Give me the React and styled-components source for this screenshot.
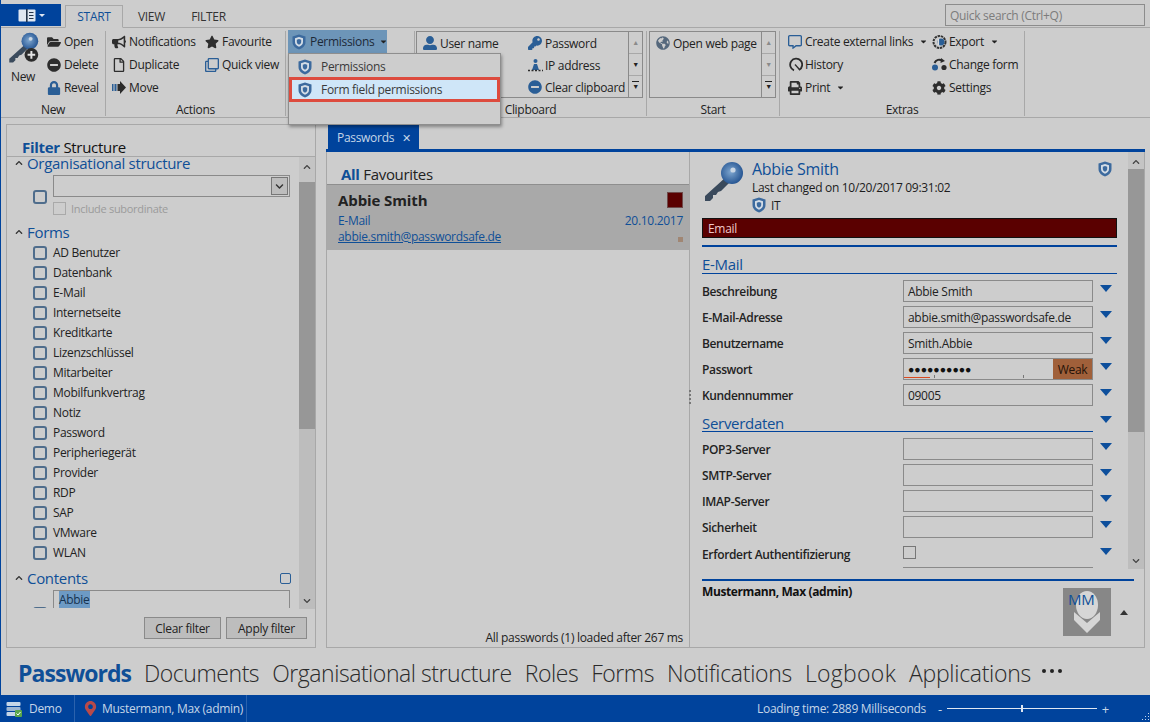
import React from 'react'
import styled, { createGlobalStyle } from 'styled-components';
import {
    FaBullhorn, FaStar, FaRegFile, FaRegClone, FaFolderOpen, FaMinusCircle, FaLock,
    FaUserAlt, FaKey, FaGlobeAmericas, FaRegCommentAlt, FaPrint, FaCog,
    FaCaretDown, FaChevronUp, FaChevronDown, FaMapMarkerAlt,
} from 'react-icons/fa';

const BLUE = '#00439c';
const TEXT_BLUE = '#0f4f97';
const ICON_BLUE = '#2a5e96';
const FONT = '"Open Sans", "Liberation Sans", sans-serif';

const formNames = ['AD Benutzer', 'Datenbank', 'E-Mail', 'Internetseite', 'Kreditkarte', 'Lizenzschlüssel', 'Mitarbeiter', 'Mobilfunkvertrag', 'Notiz', 'Password', 'Peripheriegerät', 'Provider', 'RDP', 'SAP', 'VMware', 'WLAN'];
const mailFields = [
    { label: 'Beschreibung', value: 'Abbie Smith' },
    { label: 'E-Mail-Adresse', value: 'abbie.smith@passwordsafe.de' },
    { label: 'Benutzername', value: 'Smith.Abbie' },
    { label: 'Passwort', password: true },
    { label: 'Kundennummer', value: '09005' },
];
const serverFields = ['POP3-Server', 'SMTP-Server', 'IMAP-Server', 'Sicherheit'];
const navItems = [
    { name: 'Documents', spacing: -0.45 },
    { name: 'Organisational structure', spacing: -0.45 },
    { name: 'Roles', spacing: -0.45 },
    { name: 'Forms', spacing: -0.45 },
    { name: 'Notifications', spacing: -0.3 },
    { name: 'Logbook', spacing: 0.3 },
    { name: 'Applications', spacing: -0.3 },
];

// ================ //
//    SVG DRAWINGS  //
// ================ //
function Shield({ size = 14 }) {
    return (
        <svg width={size} height={size + 2} viewBox="0 0 14 16">
            <path d="M7 0.5 L13.5 2.5 V8 C13.5 12 10 14.5 7 15.5 C4 14.5 0.5 12 0.5 8 V2.5 Z" fill="#3c6a9e" />
            <path d="M7 3 L11 4.2 V8 C11 10.5 9 12 7 12.8 C5 12 3 10.5 3 8 V4.2 Z" fill="#d4dde6" />
            <path d="M7 5 L9.2 5.8 V8 C9.2 9.4 8 10.2 7 10.7 C6 10.2 4.8 9.4 4.8 8 V5.8 Z" fill="#3c6a9e" />
        </svg>
    );
}

function BigKey({ size = 42, plus }) {
    return (
        <svg width={size} height={size} viewBox="0 0 42 42">
            <defs>
                <radialGradient id="keyhead" cx="0.45" cy="0.45" r="0.6">
                    <stop offset="0" stopColor="#7ea6cf" />
                    <stop offset="1" stopColor="#1f4f8e" />
                </radialGradient>
            </defs>
            <path d="M24 16 L3 35 L3 40 L8 40 L11 37 L11 34 L14 34 L16 31 L19 30 L29 20 Z" fill="#3a4a5c" />
            <circle cx="30" cy="12" r="11" fill="url(#keyhead)" />
            <circle cx="31" cy="9" r="2.6" fill="#c9d6e4" />
            {plus && <circle cx="32" cy="30" r="9" fill="#2b2b2b" />}
            {plus && <path d="M27 30 H37 M32 25 V35" stroke="#e4e4e4" strokeWidth="2.6" />}
        </svg>
    );
}

function MoveIcon() {
    return (
        <svg width="14" height="13" viewBox="0 0 14 13">
            <rect x="0" y="3" width="1.5" height="7" fill={ICON_BLUE} />
            <rect x="2.5" y="3" width="2" height="7" fill={ICON_BLUE} />
            <path d="M5.5 3 H8 V0 L14 6.5 L8 13 V10 H5.5 Z" fill="#2b2b2b" />
        </svg>
    );
}

function HistoryIcon() {
    return (
        <svg width="15" height="15" viewBox="0 0 15 15" fill="none">
            <path d="M11 13 A6 6 0 1 0 6 13.3" stroke="#2b2b2b" strokeWidth="1.8" />
            <path d="M7 7.5 L11.5 12.5" stroke="#2b2b2b" strokeWidth="1.3" />
        </svg>
    );
}

function ChangeFormIcon() {
    return (
        <svg width="15" height="13" viewBox="0 0 15 13">
            <circle cx="3" cy="9.5" r="3" fill={ICON_BLUE} />
            <circle cx="12" cy="9.5" r="2.6" fill="#2b2b2b" />
            <path d="M2.5 5 C4 1.5 7.5 1 10 2.5" stroke="#2b2b2b" strokeWidth="2" fill="none" />
            <path d="M9 0 L13 3 L8.5 5 Z" fill="#2b2b2b" />
        </svg>
    );
}

function ExportIcon() {
    return (
        <svg width="16" height="16" viewBox="0 0 16 16" fill="none">
            <circle cx="7.5" cy="8" r="6" stroke="#333" strokeWidth="2" strokeDasharray="2.4 0.8" />
            <circle cx="9" cy="8" r="3.4" fill={ICON_BLUE} />
            <path d="M6.5 5 V11" stroke="#ddd" strokeWidth="1.2" />
        </svg>
    );
}

function NetworkIcon() {
    return (
        <svg width="15" height="13" viewBox="0 0 15 13">
            <circle cx="7.5" cy="2" r="2" fill={ICON_BLUE} />
            <path d="M4 11 L6 5 H9 L11 11 Z" fill={ICON_BLUE} />
            <path d="M0 11.5 H15" stroke="#2b2b2b" strokeWidth="1.4" strokeDasharray="2 1.5" />
        </svg>
    );
}

function DemoIcon() {
    return (
        <svg width="16" height="16" viewBox="0 0 16 16">
            <rect x="0.5" y="1" width="14" height="4" rx="1" fill="#c5d6e8" />
            <rect x="0.5" y="6" width="14" height="4" rx="1" fill="#9db6d2" />
            <rect x="0.5" y="11" width="14" height="4" rx="1" fill="#c5d6e8" />
            <rect x="9" y="9" width="7" height="7" rx="1" fill="#5aa64a" />
            <path d="M10.5 12.5 L12 14 L14.5 11" stroke="#fff" strokeWidth="1" fill="none" />
        </svg>
    );
}

function Avatar() {
    return (
        <svg width="48" height="48" viewBox="0 0 48 48">
            <rect width="48" height="48" fill="#878787" />
            <ellipse cx="24" cy="17" rx="11" ry="14" fill="#d6d6d6" />
            <path d="M11 24 L24 35 L37 24 L37 32 L24 45 L11 32 Z" fill="#d6d6d6" />
        </svg>
    );
}

// ================ //
//   SMALL PARTS    //
// ================ //
function Tool({ icon, children, caret, color }) {
    return (
        <ToolItem>
            <ToolIcon color={color}>{icon}</ToolIcon>
            {children}
            {caret && <Caret><FaCaretDown /></Caret>}
        </ToolItem>
    );
}

function Scrollbar({ thumbHeight, capHeight }) {
    return (
        <ScrollTrack>
            <ScrollCap height={capHeight}><FaChevronUp /></ScrollCap>
            <ScrollThumb height={thumbHeight} />
            <ScrollCapBottom><FaChevronDown /></ScrollCapBottom>
        </ScrollTrack>
    );
}

function Field({ label, children }) {
    return (
        <FieldRow>
            <FieldLabel>{label}</FieldLabel>
            {children}
            <FieldArrow />
        </FieldRow>
    );
}

function RibbonGroup({ width, label, children, pad }) {
    return (
        <GroupBox width={width}>
            <GroupContent pad={pad}>{children}</GroupContent>
            <GroupLabel>{label}</GroupLabel>
        </GroupBox>
    );
}

export default function App() {
    return (
        <Page>
            <GlobalStyle />
            <TitleBar>
                <AppButton>
                    <svg width="18" height="13" viewBox="0 0 18 13">
                        <rect x="0.5" y="0.5" width="17" height="12" rx="1" fill="#dfe7f2" />
                        <rect x="8" y="0" width="1.6" height="13" fill="#24344a" />
                        <path d="M11 3.5 H15.5 M11 6.5 H15.5 M11 9.5 H15.5" stroke="#24344a" strokeWidth="1" />
                    </svg>
                    <AppCaret />
                </AppButton>
                <RibbonTab active>START</RibbonTab>
                <RibbonTab>VIEW</RibbonTab>
                <RibbonTab>FILTER</RibbonTab>
                <QuickSearch>Quick search (Ctrl+Q)</QuickSearch>
            </TitleBar>

            <Ribbon>
                <RibbonGroup width={105} label="New">
                    <NewGroup>
                        <BigButton>
                            <BigKey size={32} plus />
                            <span>New</span>
                        </BigButton>
                        <ToolColumn>
                            <Tool icon={<FaFolderOpen />}>Open</Tool>
                            <Tool icon={<FaMinusCircle />}>Delete</Tool>
                            <Tool icon={<FaLock />} color={ICON_BLUE}>Reveal</Tool>
                        </ToolColumn>
                    </NewGroup>
                </RibbonGroup>
                <RibbonGroup width={180} label="Actions">
                    <ToolsGroup padLeft={6}>
                        <ToolColumn width={93}>
                            <Tool icon={<FaBullhorn />}>Notifications</Tool>
                            <Tool icon={<FaRegFile />}>Duplicate</Tool>
                            <Tool icon={<MoveIcon />}>Move</Tool>
                        </ToolColumn>
                        <ToolColumn>
                            <Tool icon={<FaStar />}>Favourite</Tool>
                            <Tool icon={<FaRegClone />} color={ICON_BLUE}>Quick view</Tool>
                        </ToolColumn>
                    </ToolsGroup>
                </RibbonGroup>
                <RibbonGroup width={129}>
                    <PermissionsButton>
                        <Shield />
                        Permissions
                        <ButtonCaret><FaCaretDown /></ButtonCaret>
                    </PermissionsButton>
                    <Menu>
                        <MenuItem>
                            <Shield />
                            Permissions
                        </MenuItem>
                        <MenuItem highlighted>
                            <Shield />
                            Form field permissions
                        </MenuItem>
                    </Menu>
                </RibbonGroup>
                <RibbonGroup width={232} label="Clipboard" pad="0 3px 0 1px">
                    <Gallery>
                        <GalleryGrid>
                            <GalleryColumn width={105}>
                                <Tool icon={<FaUserAlt />} color={ICON_BLUE}>User name</Tool>
                            </GalleryColumn>
                            <GalleryColumn>
                                <Tool icon={<FaKey />} color={ICON_BLUE}>Password</Tool>
                                <Tool icon={<NetworkIcon />}>IP address</Tool>
                                <Tool icon={<FaMinusCircle />} color={ICON_BLUE}>Clear clipboard</Tool>
                            </GalleryColumn>
                        </GalleryGrid>
                        <GalleryScroll>
                            <GalleryArrow muted>▲</GalleryArrow>
                            <GalleryArrow>▼</GalleryArrow>
                            <GalleryArrow more>▼</GalleryArrow>
                        </GalleryScroll>
                    </Gallery>
                </RibbonGroup>
                <RibbonGroup width={133} label="Start" pad="0 3px 0 2px">
                    <Gallery>
                        <GalleryGrid>
                            <GalleryColumn>
                                <Tool icon={<FaGlobeAmericas />} color="#55687c">Open web page</Tool>
                            </GalleryColumn>
                        </GalleryGrid>
                        <GalleryScroll>
                            <GalleryArrow muted>▲</GalleryArrow>
                            <GalleryArrow muted>▼</GalleryArrow>
                            <GalleryArrow more>▼</GalleryArrow>
                        </GalleryScroll>
                    </Gallery>
                </RibbonGroup>
                <RibbonGroup width={245} label="Extras">
                    <ToolsGroup padLeft={8}>
                        <ToolColumn width={144}>
                            <Tool icon={<FaRegCommentAlt />} color={ICON_BLUE} caret>Create external links</Tool>
                            <Tool icon={<HistoryIcon />}>History</Tool>
                            <Tool icon={<FaPrint />} caret>Print</Tool>
                        </ToolColumn>
                        <ToolColumn>
                            <Tool icon={<ExportIcon />} caret>Export</Tool>
                            <Tool icon={<ChangeFormIcon />}>Change form</Tool>
                            <Tool icon={<FaCog />}>Settings</Tool>
                        </ToolColumn>
                    </ToolsGroup>
                </RibbonGroup>
            </Ribbon>

            <Main>
                <FilterPanel>
                    <PanelTitle>
                        <strong>Filter</strong> Structure
                    </PanelTitle>
                    <FilterScroll>
                        <FilterContent>
                            <SectionHead first>
                                <SectionChevron><FaChevronUp /></SectionChevron>
                                Organisational structure
                            </SectionHead>
                            <OrgRow>
                                <Check />
                                <OrgControls>
                                    <SelectBox>
                                        <SelectButton><FaChevronDown /></SelectButton>
                                    </SelectBox>
                                    <SubordinateRow>
                                        <DisabledCheck />
                                        Include subordinate
                                    </SubordinateRow>
                                </OrgControls>
                            </OrgRow>
                            <SectionHead>
                                <SectionChevron><FaChevronUp /></SectionChevron>
                                Forms
                            </SectionHead>
                            <div>
                                {formNames.map(name => (
                                    <FormRow key={name}>
                                        <Check />
                                        {name}
                                    </FormRow>
                                ))}
                            </div>
                            <SectionHead spaced>
                                <SectionChevron><FaChevronUp /></SectionChevron>
                                Contents
                                <SmallCheck />
                            </SectionHead>
                            <ContentsRow>
                                <Check />
                                <ContentsInput><mark>Abbie</mark></ContentsInput>
                            </ContentsRow>
                        </FilterContent>
                        <Scrollbar thumbHeight={247} capHeight={25} />
                    </FilterScroll>
                    <FilterButtons>
                        <FilterButton width={77}>Clear filter</FilterButton>
                        <FilterButton width={81}>Apply filter</FilterButton>
                    </FilterButtons>
                </FilterPanel>

                <Center>
                    <TabStrip>
                        <DocTab>Passwords <TabClose>✕</TabClose></DocTab>
                    </TabStrip>
                    <CenterBody>
                        <ListPane>
                            <ListTitle><strong>All</strong> Favourites</ListTitle>
                            <ListRow>
                                <RowTop>
                                    <RowName>Abbie Smith</RowName>
                                    <ColorSquare />
                                </RowTop>
                                <RowMeta>
                                    <span>E-Mail</span>
                                    <span>20.10.2017</span>
                                </RowMeta>
                                <RowMeta>
                                    <u>abbie.smith@passwordsafe.de</u>
                                    <TinySquare />
                                </RowMeta>
                            </ListRow>
                            <ListFooter>All passwords (1) loaded after 267 ms</ListFooter>
                        </ListPane>

                        <DetailPane>
                            <DetailScroll>
                                <DetailBody>
                                    <DetailHeader>
                                        <BigKey />
                                        <HeaderText>
                                            <DetailName>Abbie Smith</DetailName>
                                            <HeaderLine>Last changed on 10/20/2017 09:31:02</HeaderLine>
                                            <HeaderLine>
                                                <OrgIcon><Shield size={14} /></OrgIcon>
                                                IT
                                            </HeaderLine>
                                        </HeaderText>
                                        <HeaderShield><Shield /></HeaderShield>
                                    </DetailHeader>
                                    <TagBar>Email</TagBar>
                                    <ThickRule />
                                    <FieldHeading>E-Mail</FieldHeading>
                                    {mailFields.map(field => (
                                        <Field key={field.label} label={field.label}>
                                            {field.password ? (
                                                <PasswordBox>
                                                    <PasswordDots>●●●●●●●●●●</PasswordDots>
                                                    <StrengthMeter />
                                                    <WeakBadge>Weak</WeakBadge>
                                                </PasswordBox>
                                            ) : (
                                                <InputBox>{field.value}</InputBox>
                                            )}
                                        </Field>
                                    ))}
                                    <ServerHeading>
                                        <FieldHeading short>Serverdaten</FieldHeading>
                                        <FieldArrow />
                                    </ServerHeading>
                                    {serverFields.map(label => (
                                        <Field key={label} label={label}>
                                            <InputBox />
                                        </Field>
                                    ))}
                                    <Field label="Erfordert Authentifizierung">
                                        <CheckCell><PlainCheck /></CheckCell>
                                    </Field>
                                </DetailBody>
                                <Scrollbar thumbHeight={263} capHeight={17} />
                            </DetailScroll>
                            <Owner>
                                <OwnerName>Mustermann, Max (admin)</OwnerName>
                                <AvatarBox>
                                    <Avatar />
                                    <AvatarInitials>MM</AvatarInitials>
                                </AvatarBox>
                                <OwnerToggle />
                            </Owner>
                        </DetailPane>
                    </CenterBody>
                </Center>
            </Main>

            <BottomNav>
                <NavItem active spacing={-0.95}>Passwords</NavItem>
                {navItems.map(item => <NavItem key={item.name} spacing={item.spacing}>{item.name}</NavItem>)}
                <NavMore>
                    <NavDot /><NavDot /><NavDot />
                </NavMore>
            </BottomNav>

            <StatusBar>
                <StatusCell width={74}>
                    <StatusIcon><DemoIcon /></StatusIcon>
                    Demo
                </StatusCell>
                <StatusCell width={172} second>
                    <StatusIcon color="#b84a4a"><FaMapMarkerAlt /></StatusIcon>
                    Mustermann, Max (admin)
                </StatusCell>
                <LoadingTime>Loading time: 2889 Milliseconds</LoadingTime>
                <Zoom>
                    <span>-</span>
                    <ZoomTrack />
                    <span>+</span>
                </Zoom>
                <ResizeGrip />
            </StatusBar>
        </Page>
    );
}

// ============== //
//     STYLES     //
// ============== //
const GlobalStyle = createGlobalStyle`
    html, body {
        margin: 0;
        padding: 0;
        background: #cdcdcd;
    }
    * {
        box-sizing: border-box;
    }
    svg {
        flex: none;
    }
`;

const Page = styled.div`
    width: 1150px;
    height: 722px;
    display: flex;
    flex-direction: column;
    overflow: hidden;
    background: #cdcdcd;
    border-left: 1px solid ${BLUE};
    color: #222;
    font-family: ${FONT};
    font-size: 12px;
    letter-spacing: -0.3px;
`;

const TitleBar = styled.div`
    height: 28px;
    flex: none;
    display: flex;
    align-items: flex-end;
    position: relative;
    border-bottom: 1px solid #a8a8a8;
`;

const AppButton = styled.div`
    width: 60px;
    height: 22px;
    margin-bottom: 1px;
    margin-right: 4px;
    display: flex;
    align-items: center;
    justify-content: center;
    gap: 3px;
    background: ${BLUE};
`;

const AppCaret = styled.div`
    width: 0;
    height: 0;
    border-left: 3px solid transparent;
    border-right: 3px solid transparent;
    border-top: 3px solid #dfe7f2;
`;

const RibbonTab = styled.div`
    height: 23px;
    width: ${props => props.active ? '58px' : '57px'};
    display: flex;
    align-items: center;
    justify-content: center;
    margin-bottom: -1px;
    color: ${props => props.active ? TEXT_BLUE : '#333'};
    border: 1px solid ${props => props.active ? '#a8a8a8' : 'transparent'};
    border-bottom-color: ${props => props.active ? '#cdcdcd' : 'transparent'};
`;

const QuickSearch = styled.div`
    position: absolute;
    right: 5px;
    top: 4px;
    width: 200px;
    height: 22px;
    padding-left: 4px;
    display: flex;
    align-items: center;
    border: 1px solid #8c8c8c;
    color: #7c7c7c;
`;

const Ribbon = styled.div`
    height: 90px;
    flex: none;
    display: flex;
    border-bottom: 1px solid #a8a8a8;
`;

const GroupBox = styled.div`
    position: relative;
    width: ${props => props.width}px;
    height: 85px;
    margin-top: 3px;
    display: flex;
    flex-direction: column;
    border-right: 1px solid #a8a8a8;
`;

const GroupContent = styled.div`
    height: 67px;
    flex: none;
    padding: ${props => props.pad || '0'};
`;

const GroupLabel = styled.div`
    flex: 1;
    display: flex;
    align-items: center;
    justify-content: center;
    padding-top: 3px;
`;

const NewGroup = styled.div`
    display: flex;
    padding-left: 6px;
    gap: 8px;
`;

const BigButton = styled.div`
    width: 32px;
    display: flex;
    flex-direction: column;
    align-items: center;
    gap: 4px;
    margin-top: 1px;
`;

const ToolColumn = styled.div`
    width: ${props => props.width ? `${props.width}px` : 'auto'};
    margin-top: -1px;
    display: flex;
    flex-direction: column;
`;

const ToolItem = styled.div`
    height: 23px;
    flex: none;
    display: flex;
    align-items: center;
    white-space: nowrap;
`;

const ToolIcon = styled.span`
    width: 17px;
    flex: none;
    display: flex;
    align-items: center;
    font-size: 14px;
    color: ${props => props.color || '#2d2d2d'};
`;

const Caret = styled.span`
    display: inline-flex;
    margin-left: 6px;
    font-size: 9px;
    color: #222;
`;

const ButtonCaret = styled(Caret)`
    margin-left: 1px;
`;

const ToolsGroup = styled.div`
    display: flex;
    padding-left: ${props => props.padLeft}px;
`;

const PermissionsButton = styled.div`
    width: 99px;
    height: 23px;
    margin-left: 2px;
    margin-top: -1px;
    padding-left: 4px;
    display: flex;
    align-items: center;
    gap: 4px;
    background: #6d95b8;
    color: #1d2a38;
`;

const Menu = styled.div`
    position: absolute;
    left: 2px;
    top: 22px;
    width: 213px;
    height: 72px;
    padding: 1px 1px;
    background: #cdcdcd;
    border: 1px solid #8e8e8e;
    box-shadow: 1px 2px 3px rgba(0, 0, 0, .35);
    z-index: 10;
`;

const MenuItem = styled.div`
    height: 23px;
    display: flex;
    align-items: center;
    gap: 9px;
    padding-left: 8px;
    color: #3a3a3a;
    background: ${props => props.highlighted ? '#cfe6f8' : 'transparent'};
    outline: ${props => props.highlighted ? '3px solid #dd4b3e' : 'none'};
    outline-offset: -2px;
`;

const Gallery = styled.div`
    height: 67px;
    display: flex;
    border: 1px solid #8a8a8a;
`;

const GalleryGrid = styled.div`
    flex: 1;
    display: flex;
    padding-left: 6px;
`;

const GalleryColumn = styled.div`
    width: ${props => props.width ? `${props.width}px` : 'auto'};
    display: flex;
    flex-direction: column;

    ${ToolItem} {
        height: 22px;
    }
`;

const GalleryScroll = styled.div`
    width: 14px;
    flex: none;
    display: flex;
    flex-direction: column;
    border-left: 1px solid #8a8a8a;
`;

const GalleryArrow = styled.div`
    position: relative;
    flex: 1;
    display: flex;
    align-items: center;
    justify-content: center;
    font-size: 7px;
    color: ${props => props.muted ? '#8a8a8a' : '#222'};
    border-bottom: 1px solid #a8a8a8;

    &:last-child {
        border-bottom: 0;
    }

    &::before {
        content: '';
        display: ${props => props.more ? 'block' : 'none'};
        position: absolute;
        left: 3px;
        top: 5px;
        width: 7px;
        height: 1px;
        background: #222;
    }
`;

const Main = styled.div`
    flex: 1;
    min-height: 0;
    display: flex;
    gap: 10px;
    padding: 6px 5px 2px 5px;
`;

const FilterPanel = styled.div`
    width: 310px;
    flex: none;
    display: flex;
    flex-direction: column;
    border: 1px solid #a8a8a8;
`;

const PanelTitle = styled.div`
    height: 32px;
    flex: none;
    padding: 13px 0 0 15px;
    font-size: 15px;
    line-height: 18px;
    color: #111;
    border-bottom: 1px solid #a8a8a8;

    strong {
        color: ${TEXT_BLUE};
        font-weight: 700;
    }
`;

const FilterScroll = styled.div`
    height: 452px;
    flex: none;
    display: flex;
`;

const FilterContent = styled.div`
    flex: 1;
    min-width: 0;
`;

const SectionHead = styled.div`
    position: relative;
    height: ${props => props.first ? '14px' : '20px'};
    line-height: ${props => props.first ? '12px' : '20px'};
    margin-top: ${props => props.spaced ? '6px' : '0'};
    padding-left: 20px;
    padding-bottom: ${props => props.first ? '2px' : '0'};
    display: flex;
    align-items: center;
    font-size: 15px;
    color: ${TEXT_BLUE};
`;

const SectionChevron = styled.span`
    width: 14px;
    margin-left: -12px;
    margin-right: -2px;
    display: inline-flex;
    font-size: 8px;
    color: #333;
`;

const Check = styled.span`
    width: 14px;
    height: 14px;
    flex: none;
    border: 2px solid #4f6d8c;
    border-radius: 3px;
`;

const SmallCheck = styled.span`
    position: absolute;
    right: 8px;
    top: 5px;
    width: 11px;
    height: 11px;
    border: 1px solid ${ICON_BLUE};
    border-radius: 2px;
`;

const OrgRow = styled.div`
    display: flex;
    align-items: center;
    gap: 6px;
    padding: 4px 0 0 26px;
    margin-bottom: 3px;
`;

const OrgControls = styled.div`
    flex: 1;
    padding-right: 2px;
`;

const SelectBox = styled.div`
    width: 237px;
    height: 22px;
    display: flex;
    justify-content: flex-end;
    align-items: center;
    padding-right: 1px;
    border: 1px solid #8a8a8a;
`;

const SelectButton = styled.div`
    width: 17px;
    height: 18px;
    display: flex;
    align-items: center;
    justify-content: center;
    font-size: 9px;
    color: #333;
    background: #bdbdbd;
    border: 1px solid #777;
`;

const SubordinateRow = styled.div`
    height: 22px;
    display: flex;
    align-items: center;
    gap: 5px;
    font-size: 11px;
    color: #9b9b9b;
`;

const DisabledCheck = styled.span`
    width: 13px;
    height: 13px;
    border: 1px solid #a9a9a9;
`;

const FormRow = styled.div`
    height: 20px;
    display: flex;
    align-items: center;
    gap: 6px;
    padding-left: 26px;

    ${Check} {
        margin-top: 2px;
    }
`;

const ContentsRow = styled.div`
    display: flex;
    align-items: flex-start;
    gap: 6px;
    margin-top: 2px;
    padding-left: 26px;
    height: 18px;
    overflow: hidden;

    ${Check} {
        margin-top: 17px;
    }
`;

const ContentsInput = styled.div`
    width: 237px;
    height: 40px;
    padding: 1px 5px;
    line-height: 16px;
    border: 1px solid #8a8a8a;

    mark {
        background: #6d9ac4;
        color: #16324f;
    }
`;

const ScrollTrack = styled.div`
    position: relative;
    width: 16px;
    flex: none;
    background: #bdbdbd;
`;

const ScrollCap = styled.div`
    height: ${props => props.height}px;
    display: flex;
    justify-content: center;
    padding-top: 6px;
    font-size: 8px;
    color: #444;
    background: #c4c4c4;
`;

const ScrollCapBottom = styled.div`
    position: absolute;
    left: 0;
    right: 0;
    bottom: 4px;
    display: flex;
    justify-content: center;
    font-size: 8px;
    color: #444;
`;

const ScrollThumb = styled.div`
    height: ${props => props.height}px;
    background: #979797;
`;

const FilterButtons = styled.div`
    flex: 1;
    display: flex;
    justify-content: flex-end;
    align-items: flex-start;
    gap: 5px;
    padding: 8px 8px 0 0;
`;

const FilterButton = styled.div`
    width: ${props => props.width}px;
    height: 22px;
    display: flex;
    align-items: center;
    justify-content: center;
    background: #bdbdbd;
    border: 1px solid #8a8a8a;
`;

const Center = styled.div`
    flex: 1;
    min-width: 0;
    display: flex;
    flex-direction: column;
`;

const TabStrip = styled.div`
    height: 27px;
    flex: none;
    padding-left: 2px;
    margin-top: 1px;
    border-bottom: 3px solid ${BLUE};
`;

const DocTab = styled.div`
    width: 91px;
    height: 24px;
    display: flex;
    align-items: center;
    gap: 8px;
    padding-left: 9px;
    color: #c5d6e8;
    background: ${BLUE};
`;

const TabClose = styled.span`
    font-size: 11px;
`;

const CenterBody = styled.div`
    flex: 1;
    min-height: 0;
    display: flex;
    border: 1px solid #a8a8a8;
    border-top: 0;
`;

const ListPane = styled.div`
    width: 363px;
    flex: none;
    display: flex;
    flex-direction: column;
    border-right: 1px solid #a8a8a8;
`;

const ListTitle = styled.div`
    height: 33px;
    flex: none;
    padding: 12px 0 0 14px;
    font-size: 15px;
    line-height: 20px;
    border-bottom: 1px solid #8e8e8e;

    strong {
        color: ${TEXT_BLUE};
        font-weight: 700;
    }
`;

const ListRow = styled.div`
    height: 65px;
    flex: none;
    padding: 3px 6px 0 11px;
    background: #a9a9a9;
`;

const RowTop = styled.div`
    height: 24px;
    display: flex;
    justify-content: space-between;
    align-items: center;
`;

const RowName = styled.div`
    font-size: 15px;
    font-weight: 700;
    color: #222;
    letter-spacing: -0.1px;
`;

const ColorSquare = styled.div`
    width: 16px;
    height: 16px;
    background: #5a0000;
    border: 1px solid #6e4a4a;
`;

const RowMeta = styled.div`
    height: 16px;
    display: flex;
    justify-content: space-between;
    align-items: center;
    color: ${TEXT_BLUE};
`;

const TinySquare = styled.div`
    width: 5px;
    height: 5px;
    margin-top: 6px;
    background: #a08673;
`;

const ListFooter = styled.div`
    margin-top: auto;
    height: 18px;
    padding-right: 6px;
    text-align: right;
    color: #222;
`;

const DetailPane = styled.div`
    position: relative;
    flex: 1;
    min-width: 0;
    display: flex;
    flex-direction: column;

    &::before {
        content: '';
        position: absolute;
        left: -1px;
        top: 238px;
        width: 2px;
        height: 14px;
        border-left: 2px dotted #777;
    }
`;

const DetailScroll = styled.div`
    height: 417px;
    flex: none;
    display: flex;
    overflow: hidden;
`;

const DetailBody = styled.div`
    flex: 1;
    min-width: 0;
    padding: 9px 11px 0 12px;
`;

const DetailHeader = styled.div`
    height: 57px;
    display: flex;
    gap: 8px;
`;

const HeaderText = styled.div`
    flex: 1;
    min-width: 0;
`;

const DetailName = styled.div`
    font-size: 16px;
    line-height: 17px;
    color: ${TEXT_BLUE};
`;

const HeaderLine = styled.div`
    height: 18px;
    display: flex;
    align-items: center;
    gap: 4px;
    color: #1c1c1c;
`;

const OrgIcon = styled.span`
    display: inline-flex;
    margin-right: 1px;
`;

const HeaderShield = styled.div`
    margin-right: 5px;
`;

const TagBar = styled.div`
    height: 20px;
    padding-left: 5px;
    display: flex;
    align-items: center;
    color: #f0c9c9;
    background: #5a0000;
    border: 1px solid #111;
`;

const ThickRule = styled.div`
    height: 2px;
    margin-top: 7px;
    background: ${BLUE};
`;

const FieldHeading = styled.div`
    height: ${props => props.short ? '24px' : '27px'};
    flex: none;
    padding-top: ${props => props.short ? '5px' : '7px'};
    font-size: 15px;
    line-height: 20px;
    color: ${TEXT_BLUE};
    border-bottom: 1px solid ${BLUE};
    margin-bottom: 4px;
`;

const FieldRow = styled.div`
    height: 26px;
    display: grid;
    grid-template-columns: 201px 190px 24px;
    align-items: center;
`;

const FieldLabel = styled.div`
    font-weight: 600;
    color: #222;
    white-space: nowrap;
    letter-spacing: -0.35px;
`;

const FieldArrow = styled.div`
    justify-self: center;
    align-self: center;
    width: 0;
    height: 0;
    margin: 0 0 5px 1px;
    border-left: 6px solid transparent;
    border-right: 6px solid transparent;
    border-top: 7px solid #0d4f9c;
`;

const InputBox = styled.div`
    height: 22px;
    padding-left: 4px;
    display: flex;
    align-items: center;
    color: #222;
    border: 1px solid #8a8a8a;
`;

const PasswordBox = styled(InputBox)`
    position: relative;
    justify-content: space-between;
`;

const PasswordDots = styled.span`
    font-size: 10.5px;
    letter-spacing: 0;
    color: #111;
`;

const StrengthMeter = styled.div`
    position: absolute;
    left: 0;
    right: 39px;
    bottom: 1px;
    height: 3px;
    background:
        linear-gradient(#d9481f, #d9481f) 0 100% / 26px 1px no-repeat,
        linear-gradient(#777, #777) 30px 0 / 1px 3px no-repeat,
        linear-gradient(#777, #777) 119px 0 / 1px 3px no-repeat;
`;

const WeakBadge = styled.div`
    width: 39px;
    height: 20px;
    display: flex;
    align-items: center;
    justify-content: center;
    color: #241208;
    background: #a0603a;
`;

const ServerHeading = styled.div`
    display: grid;
    grid-template-columns: 391px 24px;
    align-items: center;
`;

const CheckCell = styled.div`
    height: 28px;
    align-self: start;
    display: flex;
    align-items: center;
    padding-bottom: 2px;
    border-bottom: 1px solid #8a8a8a;
`;

const PlainCheck = styled.span`
    width: 13px;
    height: 13px;
    border: 1px solid #777;
`;

const Owner = styled.div`
    flex: 1;
    margin: 10px 10px 0 12px;
    padding-top: 2px;
    display: flex;
    border-top: 2px solid ${BLUE};
`;

const OwnerName = styled.div`
    flex: 1;
    font-weight: 700;
    color: #111;
    letter-spacing: -0.4px;
`;

const AvatarBox = styled.div`
    position: relative;
    width: 48px;
    height: 48px;
    margin-top: 5px;
`;

const AvatarInitials = styled.span`
    position: absolute;
    left: 5px;
    top: 1px;
    font-size: 15px;
    color: ${TEXT_BLUE};
`;

const OwnerToggle = styled.div`
    width: 0;
    height: 0;
    margin: 27px 6px 0 9px;
    border-left: 4px solid transparent;
    border-right: 4px solid transparent;
    border-bottom: 5px solid #333;
`;

const BottomNav = styled.div`
    height: 45px;
    flex: none;
    display: flex;
    align-items: center;
    gap: 13px;
    padding-left: 17px;
`;

const NavItem = styled.div`
    font-size: 23px;
    font-weight: ${props => props.active ? 700 : 300};
    color: ${props => props.active ? TEXT_BLUE : '#2a2a2a'};
    white-space: nowrap;
    letter-spacing: ${props => props.spacing}px;
`;

const NavMore = styled.div`
    display: flex;
    gap: 4px;
    margin: -4px 0 0 -2px;
`;

const NavDot = styled.span`
    width: 4px;
    height: 4px;
    border-radius: 50%;
    background: #222;
`;

const StatusBar = styled.div`
    position: relative;
    height: 27px;
    flex: none;
    display: flex;
    align-items: center;
    color: #c5d6e8;
    background: ${BLUE};
`;

const StatusCell = styled.div`
    width: ${props => props.width}px;
    height: 100%;
    display: flex;
    align-items: center;
    gap: ${props => props.second ? '4px' : '7px'};
    padding-left: ${props => props.second ? '8px' : '5px'};
    white-space: nowrap;
    border-right: 1px solid #2b62ad;
`;

const StatusIcon = styled.span`
    display: inline-flex;
    font-size: 15px;
    color: ${props => props.color || 'inherit'};
`;

const LoadingTime = styled.div`
    margin-left: 510px;
    white-space: nowrap;
`;

const Zoom = styled.div`
    margin-left: 12px;
    display: flex;
    align-items: center;
    gap: 5px;
    font-size: 13px;
`;

const ZoomTrack = styled.div`
    position: relative;
    width: 150px;
    height: 1px;
    background: #dfe7f2;

    &::after {
        content: '';
        position: absolute;
        left: 74px;
        top: -3px;
        width: 2px;
        height: 7px;
        background: #dfe7f2;
    }
`;

const ResizeGrip = styled.div`
    position: absolute;
    right: 1px;
    bottom: 2px;
    width: 8px;
    height: 8px;
    background: radial-gradient(circle, #c5d6e8 1px, transparent 1px) 0 0 / 3px 3px;
    clip-path: polygon(100% 0, 100% 100%, 0 100%);
`;
